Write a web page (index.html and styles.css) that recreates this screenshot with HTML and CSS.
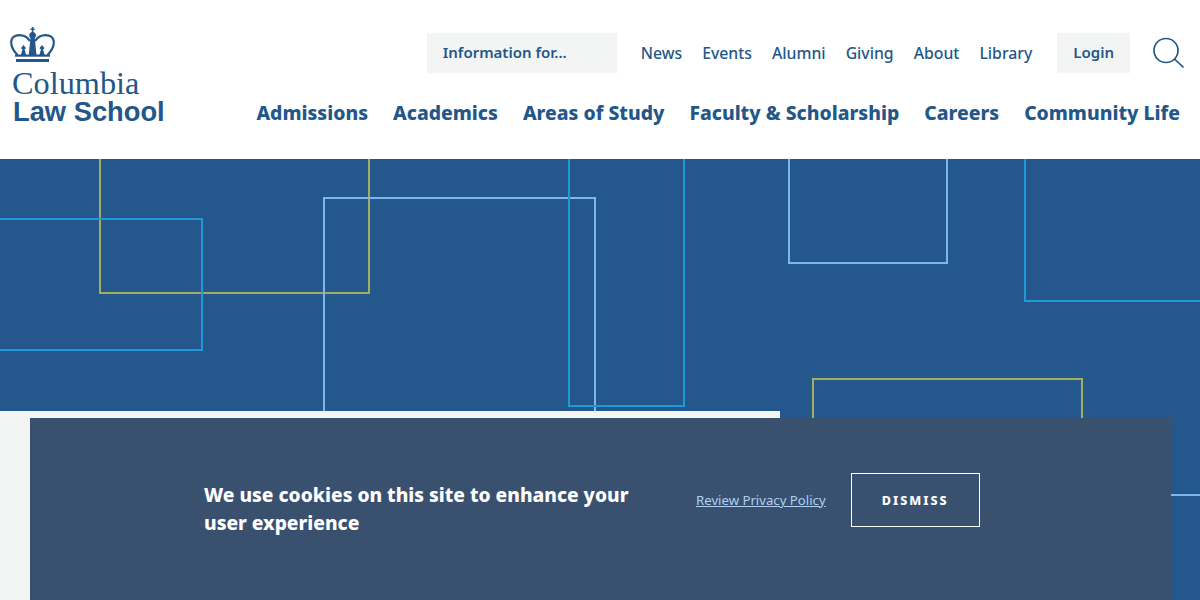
FILE: index.html
```html
<!DOCTYPE html>
<html lang="en">
<head>
  <meta charset="UTF-8">
  <title>Columbia Law School</title>
  <link rel="stylesheet" href="styles.css">
</head>
<body>
  <header class="site-header">
    <a class="logo" href="#">
      <svg class="crown" width="46" height="36" viewBox="0 0 46 36">
        <g fill="#235789">
          <rect x="21.800" y="1" width="1.600" height="6"/>
          <rect x="20.500" y="2.500" width="4.200" height="1.400"/>
          <path d="M22.600 6c2 0 3.400 1.500 3.400 3.300 0 1.200-.6 2-1.300 2.700l1.800 17h-7.800l1.800-17c-.7-.7-1.300-1.500-1.300-2.700C19.200 7.500 20.600 6 22.600 6z"/>
          <path d="M13.500 19l2.600 3.200-1.600 1.100 1.600 5.700h-5.200l1.600-5.700-1.600-1.100z"/>
          <path d="M32 19l2.600 3.200-1.600 1.100 1.600 5.700h-5.200l1.600-5.700-1.600-1.100z"/>
          <rect x="5" y="28.500" width="35" height="2.200"/>
          <rect x="6" y="33" width="33" height="3"/>
        </g>
        <path d="M7.500 29C3 24.500 1.200 20.500 1.200 16.500 1.200 11.500 5 9.200 9.500 9.200c4.500 0 8 2.300 10.500 5.800M37.500 29c4.500-4.500 6.300-8.500 6.300-12.500 0-5-3.800-7.300-8.300-7.300-4.500 0-8 2.300-10.500 5.800" fill="none" stroke="#235789" stroke-width="2.200"/>
      </svg>
      <span class="logo-top">Columbia</span>
      <span class="logo-bottom">Law School</span>
    </a>
    <div class="header-right">
      <div class="utility-nav">
        <div class="info-select">Information for...</div>
        <nav class="small-links">
          <a href="#">News</a>
          <a href="#">Events</a>
          <a href="#">Alumni</a>
          <a href="#">Giving</a>
          <a href="#">About</a>
          <a href="#">Library</a>
        </nav>
        <a class="login" href="#">Login</a>
        <svg class="search" width="31" height="32" viewBox="0 0 31 32">
          <circle cx="13" cy="13.500" r="12" fill="none" stroke="#235789" stroke-width="1.700"/>
          <path d="M21.500 22l9 8.500" fill="none" stroke="#235789" stroke-width="1.700"/>
        </svg>
      </div>
      <nav class="main-nav">
        <a href="#">Admissions</a>
        <a href="#">Academics</a>
        <a href="#">Areas of Study</a>
        <a href="#">Faculty &amp; Scholarship</a>
        <a href="#">Careers</a>
        <a href="#">Community Life</a>
      </nav>
    </div>
  </header>

  <section class="hero">
    <svg class="pattern" width="1200" height="441" viewBox="0 0 1200 441">
      <g fill="none" stroke-width="2">
        <rect x="100" y="-40" width="269" height="174" stroke="#a3ad62"/>
        <rect x="-40" y="60" width="242" height="131" stroke="#1f9ad8"/>
        <rect x="324" y="39" width="271" height="300" stroke="#7fb6ea"/>
        <rect x="569" y="-40" width="115" height="287" stroke="#1f9ad8"/>
        <rect x="789" y="-40" width="158" height="144" stroke="#7fb6ea"/>
        <rect x="1025" y="-40" width="220" height="182" stroke="#1f9ad8"/>
        <rect x="813" y="220" width="269" height="200" stroke="#a3ad62"/>
        <path d="M1100 336H1200" stroke="#7fb6ea"/>
      </g>
    </svg>
    <div class="intro-panel"></div>
  </section>

  <aside class="cookie-bar">
    <p class="cookie-text">We use cookies on this site to enhance your user experience</p>
    <a class="cookie-link" href="#">Review Privacy Policy</a>
    <button class="dismiss">DISMISS</button>
  </aside>
</body>
</html>
```

FILE: styles.css
```css
html, body {
  margin: 0;
  padding: 0;
  height: 600px;
  overflow: hidden;
}

body {
  font-family: 'Noto Sans', sans-serif;
  color: #235789;
  background-color: #ffffff;
  position: relative;
}

a {
  color: inherit;
  text-decoration: none;
}

.site-header {
  height: 159px;
  display: flex;
  justify-content: space-between;
  box-sizing: border-box;
  padding: 26px 16px 0 10px;
}

.logo {
  display: flex;
  flex-direction: column;
  width: 170px;
}

.crown {
  display: block;
}

.logo-top {
  font-family: 'Liberation Serif', serif;
  font-size: 32.300px;
  line-height: 30px;
  margin: 6px 0 0 2px;
}

.logo-bottom {
  font-family: 'Liberation Sans', sans-serif;
  font-weight: bold;
  font-size: 27.300px;
  line-height: 28px;
  margin-left: 3px;
}

.header-right {
  display: flex;
  flex-direction: column;
  align-items: flex-end;
}

.utility-nav {
  display: flex;
  align-items: center;
  margin-top: 7px;
}

.info-select {
  width: 190px;
  height: 40px;
  box-sizing: border-box;
  padding-left: 16px;
  background-color: #f3f5f5;
  font-size: 15px;
  font-weight: 600;
  line-height: 38px;
}

.small-links {
  display: flex;
  gap: 20px;
  margin-left: 24px;
  font-size: 15.800px;
  font-weight: 500;
}

.login {
  margin-left: 25px;
  padding: 0 16px;
  height: 40px;
  line-height: 38px;
  background-color: #f3f5f5;
  font-size: 15px;
  font-weight: 600;
}

.search {
  margin-left: 23px;
}

.main-nav {
  display: flex;
  gap: 25px;
  margin: 26px 4px 0 0;
  font-size: 19.350px;
  font-weight: 800;
}

.hero {
  position: relative;
  height: 441px;
  background-color: #24578c;
  overflow: hidden;
}

.pattern {
  position: absolute;
  left: 0;
  top: 0;
}

.intro-panel {
  position: absolute;
  left: 0;
  top: 252px;
  width: 780px;
  height: 189px;
  background-color: #f3f5f5;
}

.cookie-bar {
  position: absolute;
  left: 30px;
  right: 29px;
  top: 418px;
  height: 182px;
  background-color: #3a506f;
  display: flex;
  align-items: flex-start;
  box-sizing: border-box;
  padding: 55px 0 0 174px;
}

.cookie-text {
  width: 450px;
  margin: 8px 42px 0 0;
  font-size: 19.200px;
  font-weight: 800;
  line-height: 28px;
  color: #ffffff;
}

.cookie-link {
  margin-top: 18px;
  font-size: 13.200px;
  color: #a9d0f5;
  text-decoration: underline;
}

.dismiss {
  width: 129px;
  height: 54px;
  margin-left: 25px;
  background: transparent;
  border: 1px solid #ffffff;
  color: #ffffff;
  font-family: inherit;
  font-size: 12.600px;
  font-weight: 800;
  letter-spacing: 2px;
}
```
